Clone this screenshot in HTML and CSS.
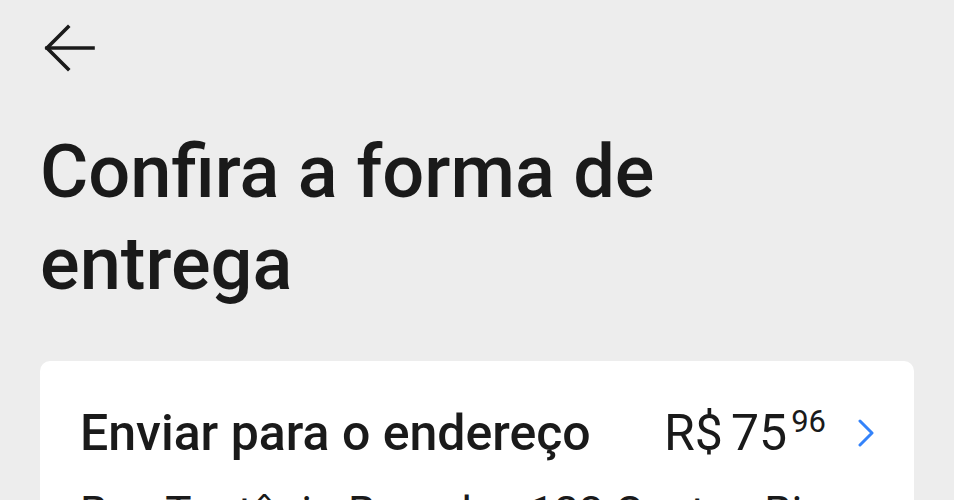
FILE: index.html
```html
<!DOCTYPE html>
<html lang="pt-BR">
<head>
<meta charset="utf-8">
<title>Confira a forma de entrega</title>
<link rel="stylesheet" href="styles.css">
</head>
<body>
<header class="topbar">
  <button class="back" aria-label="Voltar">
    <svg width="54" height="50" viewBox="0 0 54 50" fill="none" stroke="#1a1a1a" stroke-width="3.6" stroke-linecap="square">
      <path d="M4 24 H50"/>
      <path d="M25 3 L4 24 L25 45"/>
    </svg>
  </button>
</header>
<h1 class="title">Confira a forma de entrega</h1>
<section class="card">
  <div class="row">
    <span class="label">Enviar para o endereço</span>
    <span class="price">R$<span class="thin"></span>75<sup class="cents">96</sup></span>
    <svg class="chev" width="20" height="28" viewBox="0 0 20 28" fill="none" stroke="#3483fa" stroke-width="3" stroke-linecap="round" stroke-linejoin="round">
      <path d="M4 2 L16 14 L4 26"/>
    </svg>
  </div>
  <p class="address">Rua Teotônio Regadas 123 Centro, Rio</p>
</section>
</body>
</html>
```

FILE: styles.css
```css
html, body {
  margin: 0;
  padding: 0;
  background: #ededed;
  font-family: "Roboto", "Liberation Sans", sans-serif;
  color: #1a1a1a;
}
.topbar {
  height: 96px;
  display: flex;
  align-items: flex-start;
  padding: 24px 0 0 43px;
  box-sizing: border-box;
}
.back {
  border: 0;
  background: none;
  padding: 0;
  margin: 0;
  display: block;
}
.back svg { display: block; }
.title {
  margin: 30px 40px 0 40px;
  font-size: 74px;
  line-height: 92px;
  font-weight: 500;
  letter-spacing: 0;
  width: 700px;
}
.card {
  margin: 51px 40px 0 40px;
  background: #fff;
  border-radius: 10px;
  padding: 43px 38px 0 40px;
  height: 200px;
}
.row {
  display: flex;
  align-items: center;
}
.label {
  font-size: 50px;
  font-weight: 500;
  flex: 1;
}
.price {
  font-size: 50px;
  font-weight: 400;
}
.thin {
  display: inline-block;
  width: 8px;
}
.cents {
  font-size: 31px;
  vertical-align: 18px;
  margin-left: 4px;
  line-height: 0;
}
.chev {
  margin-left: 30px;
  display: block;
}
.address {
  margin: 25px 0 0 0;
  font-size: 44px;
  font-weight: 400;
}
```
